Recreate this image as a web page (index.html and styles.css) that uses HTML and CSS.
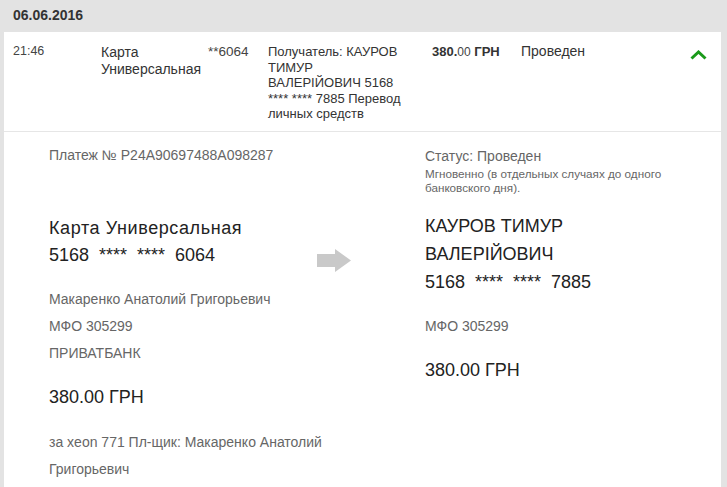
FILE: index.html
```html
<!DOCTYPE html>
<html lang="ru">
<head>
<meta charset="utf-8">
<title>Платеж</title>
<link rel="stylesheet" href="styles.css">
</head>
<body>
<div class="page">
  <div class="date-header">06.06.2016</div>
  <div class="card">
    <div class="row">
      <div class="c-time">21:46</div>
      <div class="c-card">Карта Универсальная</div>
      <div class="c-num">**6064</div>
      <div class="c-desc">Получатель: КАУРОВ<br>ТИМУР<br>ВАЛЕРІЙОВИЧ 5168<br>**** **** 7885 Перевод<br>личных средств</div>
      <div class="c-amount"><b>380.</b><span class="cents">00</span> <b>ГРН</b></div>
      <div class="c-status">Проведен</div>
      <div class="c-toggle">
        <svg width="17" height="10" viewBox="0 0 17 10"><polyline points="1.5,8.5 8.5,2 15.5,8.5" fill="none" stroke="#1a9a1a" stroke-width="3"/></svg>
      </div>
    </div>
    <div class="details">
      <div class="col-left">
        <div class="label">Платеж № P24A90697488A098287</div>
        <div class="account">
          <div class="account-text">
            <div class="big name">Карта Универсальная</div>
            <div class="big">5168&nbsp; ****&nbsp; ****&nbsp; 6064</div>
          </div>
          <svg class="arrow" width="34" height="23" viewBox="0 0 34 23"><polygon points="0,5 18,5 18,0 34,11.5 18,23 18,18 0,18" fill="#c9c9c9"/></svg>
        </div>
        <div class="info first">Макаренко Анатолий Григорьевич</div>
        <div class="info">МФО 305299</div>
        <div class="info">ПРИВАТБАНК</div>
        <div class="big sum">380.00 ГРН</div>
        <div class="info purpose">за xeon 771 Пл-щик: Макаренко Анатолий Григорьевич</div>
      </div>
      <div class="col-right">
        <div class="status">Статус: Проведен</div>
        <div class="note">Мгновенно (в отдельных случаях до одного банковского дня).</div>
        <div class="recipient">
          <div class="big tall">КАУРОВ ТИМУР</div>
          <div class="big tall">ВАЛЕРІЙОВИЧ</div>
          <div class="big tall">5168&nbsp; ****&nbsp; ****&nbsp; 7885</div>
        </div>
        <div class="info first">МФО 305299</div>
        <div class="big sum">380.00 ГРН</div>
      </div>
    </div>
  </div>
</div>
</body>
</html>
```

FILE: styles.css
```css
html, body {
  margin: 0;
  padding: 0;
}
body {
  background: #e3e3e3;
  font-family: "Liberation Sans", Arial, sans-serif;
  color: #333;
}
.page {
  padding: 0 6px 0 4px;
}
.date-header {
  height: 32px;
  line-height: 31px;
  padding-left: 9px;
  font-size: 14px;
  font-weight: bold;
  color: #333;
}
.card {
  background: #fff;
  min-height: 460px;
}
.row {
  display: flex;
  align-items: flex-start;
  padding: 12px 0 9px 9px;
  border-bottom: 1px solid #e6e6e6;
  font-size: 13px;
  line-height: 15.5px;
}
.c-time {
  width: 88px;
  font-size: 12.5px;
  color: #444;
}
.c-card {
  width: 107px;
  font-size: 14px;
  line-height: 17px;
}
.c-num {
  width: 60px;
  font-size: 13.5px;
  color: #444;
}
.c-desc {
  width: 164px;
  white-space: nowrap;
}
.c-amount {
  width: 89px;
  color: #333;
}
.c-amount b {
  font-weight: bold;
}
.cents {
  font-size: 12px;
  color: #444;
}
.c-status {
  width: 169px;
  font-size: 14px;
}
.c-toggle {
  padding-top: 4px;
}
.details {
  display: flex;
  padding: 13px 0 20px 45px;
}
.col-left {
  width: 376px;
}
.col-right {
  width: 262px;
}
.label {
  font-size: 14px;
  line-height: 20px;
  color: #666;
}
.status {
  font-size: 14px;
  line-height: 22px;
  color: #666;
}
.note {
  font-size: 11.7px;
  line-height: 14px;
  color: #666;
}
.account {
  display: flex;
  margin-top: 50px;
}
.account-text {
  flex: 1;
}
.arrow {
  margin: 34px 74px -5px 0;
}
.big {
  font-size: 18px;
  line-height: 27px;
  color: #222;
}
.big.name {
  letter-spacing: 0.6px;
}
.big.tall {
  line-height: 28px;
}
.recipient {
  margin-top: 17px;
}
.info {
  font-size: 14px;
  line-height: 27px;
  color: #666;
}
.col-left .info.first {
  margin-top: 17px;
}
.col-right .info.first {
  margin-top: 17px;
}
.sum {
  margin-top: 17px;
}
.purpose {
  margin-top: 18px;
  max-width: 290px;
}
```
